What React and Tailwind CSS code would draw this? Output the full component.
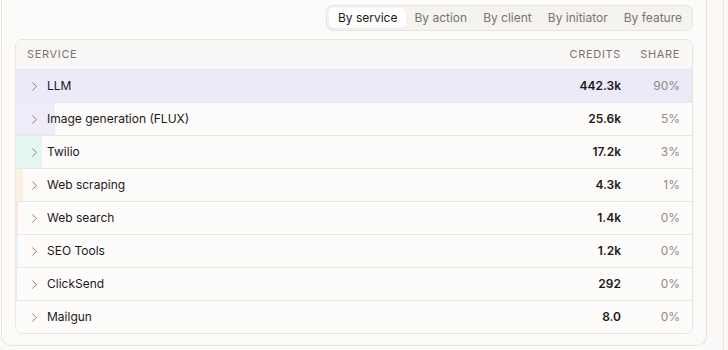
import { ChevronRight } from 'lucide-react';

const tabs = ['By service', 'By action', 'By client', 'By initiator', 'By feature'];

const rows = [
  { name: 'LLM', credits: 442300, label: '442.3k', share: '90%', color: '#ebeaf8' },
  { name: 'Image generation (FLUX)', credits: 25600, label: '25.6k', share: '5%', color: '#f0ebf8' },
  { name: 'Twilio', credits: 17200, label: '17.2k', share: '3%', color: '#e5f6f0' },
  { name: 'Web scraping', credits: 4300, label: '4.3k', share: '1%', color: '#fcf0e2' },
  { name: 'Web search', credits: 1400, label: '1.4k', share: '0%', color: '#fbe6e6' },
  { name: 'SEO Tools', credits: 1200, label: '1.2k', share: '0%', color: '#e3f2fa' },
  { name: 'ClickSend', credits: 292, label: '292', share: '0%', color: '#ece9f7' },
  { name: 'Mailgun', credits: 8, label: '8.0', share: '0%', color: '#ece9f7' },
];

const max = rows[0].credits;

export default function App() {
  return (
    <div className="relative h-[350px] w-[728px] overflow-hidden bg-[#fbfaf8] font-['Inter',sans-serif] text-[#1c1917]">
      <div className="ml-[1px] w-[706px] h-[346px] rounded-b-[10px] border-x border-b border-[#e9e6e1] bg-[#fcfbfa] px-[13px] pt-[5px]">
        <div className="flex justify-end">
          <div className="flex items-center rounded-[7px] border border-[#e7e4df] bg-[#f5f3f0] p-[2px] text-[12px] leading-[16px]">
            {tabs.map((t, i) => (
              <div
                key={t}
                className={
                  i === 0
                    ? 'rounded-[5px] bg-white px-[9px] py-[2px] text-[#1c1917] shadow-[0_1px_1px_rgba(0,0,0,0.04)]'
                    : 'px-[8px] py-[2px] text-[#7a746e]'
                }
              >
                {t}
              </div>
            ))}
          </div>
        </div>

        <div className="mt-[8px] overflow-hidden rounded-[7px] border border-[#e9e6e1] bg-[#fdfcfb]">
          <div className="flex h-[30px] items-center border-b border-[#e9e6e1] bg-[#f9f8f6] pl-[11px] pr-[12px] text-[11px] tracking-[0.06em] text-[#7a746e]">
            <div className="flex-1">SERVICE</div>
            <div className="text-right">CREDITS</div>
            <div className="w-[59px] text-right">SHARE</div>
          </div>
          {rows.map((r, i) => (
            <div
              key={r.name}
              className={`relative flex items-center pl-[11px] pr-[12px] text-[12px] ${i < rows.length - 1 ? 'h-[33px] border-b border-[#ebe8e4]' : 'h-[32px]'}`}
            >
              <div
                className="absolute inset-y-0 left-0"
                style={{ width: `${(r.credits / max) * 100}%`, backgroundColor: r.color }}
              />
              <div className="relative flex flex-1 items-center gap-[5px]">
                <ChevronRight size={15} strokeWidth={1.5} className="text-[#7d7771]" />
                <span>{r.name}</span>
              </div>
              <div className="relative text-right font-semibold">{r.label}</div>
              <div className="relative w-[59px] text-right text-[#8f8a84]">{r.share}</div>
            </div>
          ))}
        </div>
      </div>
      <div className="absolute right-[4px] top-0 h-full border-l border-[#ebe8e3]" />
    </div>
  );
}
